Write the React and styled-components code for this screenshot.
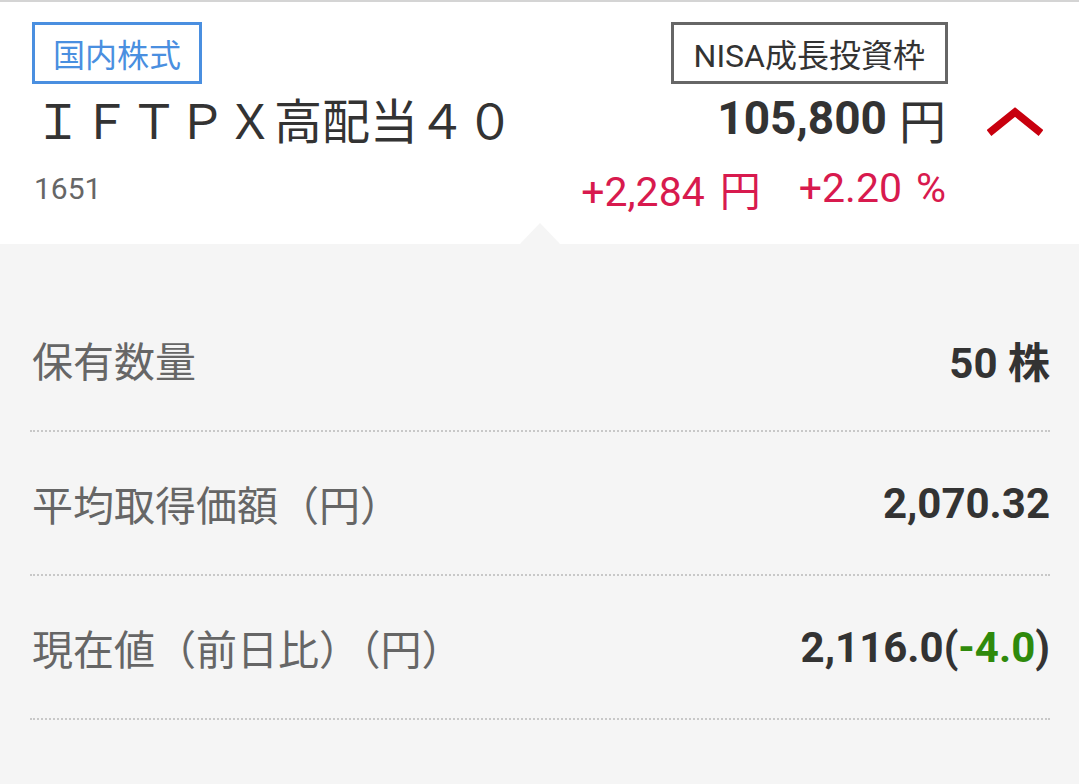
import React from "react";
import styled, { createGlobalStyle } from "styled-components";

const GlobalStyle = createGlobalStyle`
  html, body {
    margin: 0;
    padding: 0;
    background: #f5f5f5;
  }
  body {
    font-family: Roboto, "Noto Sans CJK JP", sans-serif;
  }
`;

const Page = styled.div`
  min-height: 784px;
  background: #f5f5f5;
  font-family: Roboto, "Noto Sans CJK JP", sans-serif;
`;

const Header = styled.div`
  display: grid;
  grid-template-columns: 1fr auto 131px;
  grid-template-rows: 62px 68px 72px;
  align-items: center;
  padding: 20px 0 20px 32px;
  height: 202px;
  background: #fff;
  border-top: 2px solid #d4d4d4;
  color: #333;
`;

const Tag = styled.div`
  justify-self: start;
  align-self: stretch;
  box-sizing: border-box;
  display: flex;
  align-items: center;
  padding: 0 18px;
  border: 3px solid #4a8fe0;
  color: #4a8fe0;
  font-size: 32px;
  font-family: "Noto Sans CJK JP", sans-serif;
`;

const NisaTag = styled(Tag)`
  justify-self: end;
  padding: 0 20px;
  border-color: #666;
  color: #333;
  font-family: Roboto, "Noto Sans CJK JP", sans-serif;
  font-size: 32px;
`;

const Title = styled.div`
  font-family: "Noto Sans CJK JP", sans-serif;
  font-size: 48px;
  line-height: 1;
  margin-left: 2px;
  color: #333;
`;

const Price = styled.div`
  justify-self: end;
  display: flex;
  align-items: center;
  font-size: 46px;
  font-weight: 700;
  color: #333;
  margin-right: 2px;
`;

const Unit = styled.span`
  font-weight: 400;
  font-size: ${(p) => p.size || "inherit"};
  margin-left: ${(p) => p.gap || "10px"};
`;

const Chevron = styled.div`
  display: flex;
  justify-content: flex-start;
  padding-left: 39px;
  margin-top: 8px;
  svg {
    display: block;
  }
`;

const Code = styled.div`
  font-size: 30px;
  color: #666;
  margin-left: 2px;
`;

const Change = styled.div`
  justify-self: end;
  display: flex;
  align-items: center;
  gap: 38px;
  font-size: 41px;
  color: #d81a4e;
  margin-right: 2px;
`;

const Body = styled.div`
  position: relative;
  padding: 44px 29px 0 30px;
  &::before {
    content: "";
    position: absolute;
    top: -21px;
    left: 520px;
    border-left: 20px solid transparent;
    border-right: 20px solid transparent;
    border-bottom: 21px solid #f5f5f5;
  }
`;

const Row = styled.div`
  display: flex;
  justify-content: space-between;
  align-items: center;
  height: 142px;
  border-bottom: 2px dotted #c8c8c8;
`;

const Label = styled.div`
  font-family: "Noto Sans CJK JP", sans-serif;
  font-size: 41px;
  color: #666;
  padding-left: 2px;
`;

const Value = styled.div`
  font-size: 42px;
  font-weight: 700;
  color: #333;
`;

const Minus = styled.span`
  color: #2f8a0c;
`;

const rows = [
  { label: "保有数量", value: "50 株" },
  { label: "平均取得価額（円）", value: "2,070.32" },
  { label: "現在値（前日比）（円）", value: "2,116.0", diff: "-4.0" },
];

const App = () => {
  return (
    <Page>
      <GlobalStyle />
      <Header>
        <Tag>国内株式</Tag>
        <NisaTag>NISA成長投資枠</NisaTag>
        <span />
        <Title>ＩＦＴＰＸ高配当４０</Title>
        <Price>
          105,800<Unit size="47px" gap="12px">円</Unit>
        </Price>
        <Chevron>
          <svg width="56" height="30" viewBox="0 0 56 30">
            <path d="M2 26 L28 5 L54 26" fill="none" stroke="#c8000e" strokeWidth="7.5" />
          </svg>
        </Chevron>
        <Code>1651</Code>
        <Change>
          <span>
            +2,284<Unit gap="15px">円</Unit>
          </span>
          <span>
            +2.20<Unit gap="14px">%</Unit>
          </span>
        </Change>
        <span />
      </Header>
      <Body>
        {rows.map((r) => (
          <Row key={r.label}>
            <Label>{r.label}</Label>
            <Value>
              {r.value}
              {r.diff && (
                <>
                  (<Minus>{r.diff}</Minus>)
                </>
              )}
            </Value>
          </Row>
        ))}
      </Body>
    </Page>
  );
};

export default App;
